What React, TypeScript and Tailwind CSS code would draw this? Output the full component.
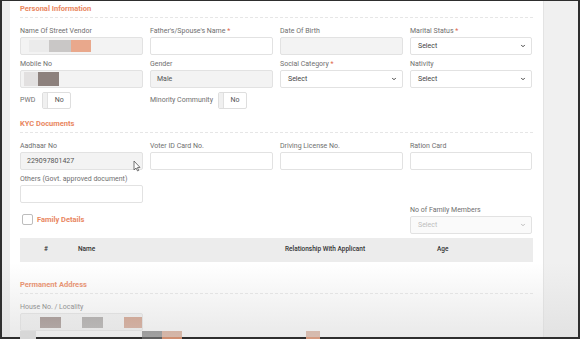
import React from 'react';
import { ChevronDown } from 'lucide-react';

const font = { fontFamily: 'Roboto, "Liberation Sans", sans-serif' };

const Label: React.FC<{ text: string; required?: boolean }> = ({ text, required }) => (
  <div className="h-[10px] leading-[10px] text-[7px] text-[#6f6f6f] whitespace-nowrap">
    {text}
    {required && <span className="text-[#e0664a]"> *</span>}
  </div>
);

const TextField: React.FC<{ label: string; required?: boolean; value?: string; gray?: boolean; children?: React.ReactNode }> = ({
  label,
  required,
  value,
  gray,
  children,
}) => (
  <div className="flex flex-col gap-[1px]">
    <Label text={label} required={required} />
    <div
      className={`relative h-[18px] rounded-[2px] border border-[#e2e2e2] flex items-center px-[6px] text-[7px] text-[#555] overflow-hidden ${
        gray ? 'bg-[#f3f3f3]' : 'bg-white'
      }`}
    >
      {value}
      {children}
    </div>
  </div>
);

const SelectField: React.FC<{ label: string; required?: boolean; disabled?: boolean }> = ({ label, required, disabled }) => (
  <div className="flex flex-col gap-[1px]">
    <Label text={label} required={required} />
    <div
      className={`h-[18px] rounded-[2px] border border-[#e2e2e2] flex items-center justify-between pl-[7px] pr-[5px] text-[7px] ${
        disabled ? 'bg-[#fafafa] text-[#bdbdbd]' : 'bg-white text-[#444]'
      }`}
    >
      <span>Select</span>
      <ChevronDown size={6} strokeWidth={4} className={disabled ? 'text-[#bbb]' : 'text-[#444]'} />
    </div>
  </div>
);

const Toggle: React.FC = () => (
  <div className="flex h-[17px] w-[29px] rounded-[2px] border border-[#dedede] bg-white overflow-hidden">
    <div className="w-[5px] h-full bg-[#f0f0f0] border-r border-[#e0e0e0]" />
    <div className="flex-1 flex items-center justify-center text-[7px] text-[#555]">No</div>
  </div>
);

const Heading: React.FC<{ text: string; className?: string }> = ({ text, className }) => (
  <div
    className={`h-[17px] flex items-center border-b border-dashed border-[#e6e6e6] text-[7.5px] font-bold text-[#e9875f] ${className ?? ''}`}
  >
    {text}
  </div>
);

const Blot: React.FC<{ className: string }> = ({ className }) => <div className={`h-full ${className}`} />;

export default function App() {
  return (
    <div className="w-[580px] h-[339px] bg-[#2e2e2e] pt-[1px] pb-[2px] pl-[2px] pr-[2px] overflow-hidden" style={font}>
      <div className="relative flex h-full bg-white">
        <div className="w-[8px] h-full bg-[#ededed]" />

        <div className="w-[533px] h-full bg-white pl-[10px] pr-[10px]">
          <Heading text="Personal Information" />

          <div className="mt-[8px] grid grid-cols-[123px_123px_123px_122px] gap-x-[7px] gap-y-[4px]">
            <TextField label="Name Of Street Vendor" gray>
              <div className="absolute left-[8px] top-[2px] bottom-[2px] flex">
                <Blot className="w-[20px] bg-[#ebebeb]" />
                <Blot className="w-[22px] bg-[#c9c7c6]" />
                <Blot className="w-[20px] bg-[#e9a88c]" />
              </div>
            </TextField>
            <TextField label="Father's/Spouse's Name" required />
            <TextField label="Date Of Birth" gray />
            <SelectField label="Marital Status" required />

            <TextField label="Mobile No" gray>
              <div className="absolute left-[3px] top-[1px] bottom-[1px] flex">
                <Blot className="w-[14px] bg-[#e2e0e0]" />
                <Blot className="w-[21px] bg-[#8d817d]" />
              </div>
            </TextField>
            <TextField label="Gender" value="Male" gray />
            <SelectField label="Social Category" required />
            <SelectField label="Nativity" />

            <div className="flex items-center h-[17px] gap-[7px]">
              <span className="text-[7px] text-[#6f6f6f]">PWD</span>
              <Toggle />
            </div>
            <div className="flex items-center h-[17px] gap-[5px]">
              <span className="text-[7px] text-[#6f6f6f]">Minority Community</span>
              <Toggle />
            </div>
          </div>

          <Heading text="KYC Documents" className="mt-[7px]" />

          <div className="mt-[8px] grid grid-cols-[123px_123px_123px_122px] gap-x-[7px] gap-y-[4px]">
            <TextField label="Aadhaar No" value="229097801427" gray />
            <TextField label="Voter ID Card No." />
            <TextField label="Driving License No." />
            <TextField label="Ration Card" />
            <TextField label="Others (Govt. approved document)" />
          </div>

          <div className="mt-[2px] grid grid-cols-[123px_123px_123px_122px] gap-x-[7px]">
            <div className="col-span-3 pt-[9px] pl-[2px] flex items-start gap-[4px]">
              <div className="w-[11px] h-[11px] rounded-[2px] border border-[#bdbdbd] bg-white" />
              <span className="leading-[11px] text-[7.5px] font-bold text-[#e9875f]">Family Details</span>
            </div>
            <SelectField label="No of Family Members" disabled />
          </div>

          <div className="mt-[4px] h-[24px] w-[513px] bg-[#ececec] grid grid-cols-[52px_207px_152px_1fr] items-center text-[6.5px] font-medium text-[#333]">
            <div className="text-center">#</div>
            <div className="pl-[6px]">Name</div>
            <div className="pl-[6px]">Relationship With Applicant</div>
            <div className="pl-[6px]">Age</div>
          </div>

          <Heading text="Permanent Address" className="mt-[15px]" />

          <div className="mt-[8px] grid grid-cols-[123px_123px_123px_122px] gap-x-[7px]">
            <TextField label="House No. / Locality" gray>
              <div className="absolute left-[19px] top-[3px] bottom-[2px] flex gap-[21px]">
                <Blot className="w-[21px] bg-[#8a7671]" />
                <Blot className="w-[21px] bg-[#999593]" />
                <Blot className="w-[21px] bg-[#c98a70]" />
              </div>
            </TextField>
          </div>
          <div className="flex h-[8px]">
            <div className="w-[16px] bg-[#d6d6d6]" />
            <div className="w-[106px]" />
            <div className="w-[20px] bg-[#5f5f5f]" />
            <div className="w-[20px] bg-[#cf8e70]" />
            <div className="w-[124px]" />
            <div className="w-[14px] bg-[#d49a80]" />
          </div>
        </div>

        <div className="flex-1 h-full bg-[#f0f0f0] border-l border-[#e3e3e3]" />

        {/* mouse pointer */}
        <svg className="absolute left-[131px] top-[159px]" width="8" height="12" viewBox="0 0 8 12">
          <path d="M1 1 L1 10 L3 8 L4.6 11 L5.8 10.4 L4.3 7.6 L7 7.4 Z" fill="#fff" stroke="#555" strokeWidth="0.8" strokeLinejoin="round" />
        </svg>

        {/* video fade at the bottom */}
        <div className="pointer-events-none absolute left-0 right-0 top-[262px] bottom-0 bg-linear-to-b from-white/0 to-[#d8d8d8]/55" />
      </div>
    </div>
  );
}
